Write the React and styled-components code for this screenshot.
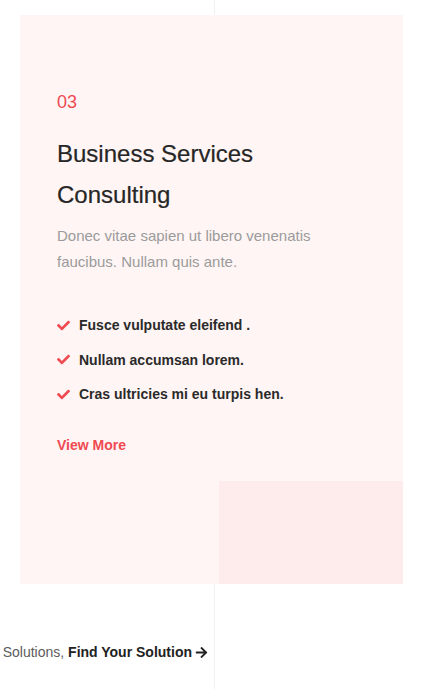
import React from 'react'
import styled, { createGlobalStyle } from 'styled-components'
import { FaCheck, FaArrowRight } from 'react-icons/fa'

const points = [
    'Fusce vulputate eleifend .',
    'Nullam accumsan lorem.',
    'Cras ultricies mi eu turpis hen.',
]

export default function App() {
    return (
        <>
            <GlobalStyle />
            <Page>
                <Card>
                    <Content>
                        <Number>03</Number>
                        <Title>Business Services Consulting</Title>
                        <Text>Donec vitae sapien ut libero venenatis faucibus. Nullam quis ante.</Text>
                        <List>
                            {points.map((point) => (
                                <Item key={point}>
                                    <FaCheck size={13} />
                                    <span>{point}</span>
                                </Item>
                            ))}
                        </List>
                        <More href="#">View More</More>
                    </Content>
                    <Corner />
                </Card>
                <Footer>
                    <FooterText>
                        Solutions, <strong>Find Your Solution</strong>
                        <FaArrowRight size={13} />
                    </FooterText>
                </Footer>
            </Page>
        </>
    )
}

const GlobalStyle = createGlobalStyle`
    * {
        box-sizing: border-box;
    }
    body {
        margin: 0;
        background: #ffffff;
        font-family: "Liberation Sans", Arial, sans-serif;
        overflow: hidden;
    }
`

const Page = styled.div`
    min-height: 689px;
    padding-top: 15px;
    background: linear-gradient(
        to right,
        transparent 214px,
        #f1f1f1 214px,
        #f1f1f1 215px,
        transparent 215px
    );
`

const Card = styled.div`
    width: 383px;
    margin-left: 20px;
    padding: 74px 0 0 37px;
    background: #fff5f4;
    display: flex;
    flex-direction: column;
`

const Content = styled.div`
    width: 309px;
    display: flex;
    flex-direction: column;
    align-items: flex-start;
`

const Number = styled.div`
    color: #ef4a52;
    font-size: 18px;
    line-height: 27px;
`

const Title = styled.h2`
    margin: 17px 0 0;
    max-width: 300px;
    color: #262626;
    font-size: 24px;
    font-weight: 400;
    line-height: 41px;
    -webkit-text-stroke: 0.2px #262626;
`

const Text = styled.p`
    margin: 8px 0 0;
    color: #9b9b9b;
    font-size: 15px;
    line-height: 26px;
`

const List = styled.ul`
    list-style: none;
    margin: 38px 0 0;
    padding: 0;
    display: flex;
    flex-direction: column;
    gap: 10.5px;
`

const Item = styled.li`
    display: flex;
    align-items: center;
    gap: 9px;
    color: #2a2a2a;
    font-size: 14px;
    font-weight: 700;
    line-height: 24px;
    svg {
        color: #ef4a52;
        flex-shrink: 0;
    }
`

const More = styled.a`
    margin-top: 27px;
    color: #ef4a52;
    font-size: 14px;
    font-weight: 700;
    line-height: 24px;
    text-decoration: none;
`

const Corner = styled.div`
    align-self: flex-end;
    width: 184px;
    height: 103px;
    margin-top: 24px;
    background: #fdeceb;
`

const Footer = styled.div`
    width: 214px;
    margin-top: 56px;
    padding-right: 6px;
    display: flex;
    justify-content: flex-end;
`

const FooterText = styled.div`
    flex-shrink: 0;
    display: flex;
    align-items: center;
    white-space: pre;
    color: #5c5c5c;
    font-size: 14px;
    line-height: 24px;
    strong {
        color: #222222;
        font-weight: 700;
    }
    svg {
        margin-left: 3px;
        color: #222222;
    }
`
